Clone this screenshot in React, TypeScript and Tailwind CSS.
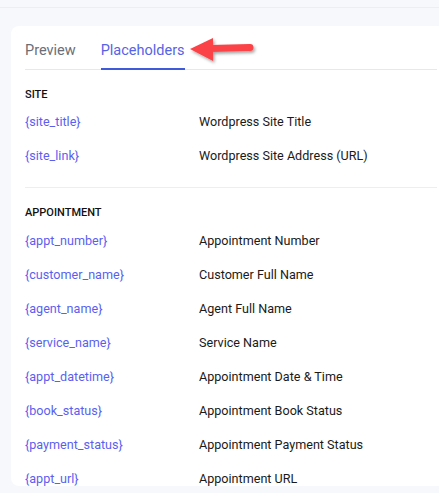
import React from 'react';

const site = [
  { key: '{site_title}', label: 'Wordpress Site Title' },
  { key: '{site_link}', label: 'Wordpress Site Address (URL)' },
];

const appointment = [
  { key: '{appt_number}', label: 'Appointment Number' },
  { key: '{customer_name}', label: 'Customer Full Name' },
  { key: '{agent_name}', label: 'Agent Full Name' },
  { key: '{service_name}', label: 'Service Name' },
  { key: '{appt_datetime}', label: 'Appointment Date & Time' },
  { key: '{book_status}', label: 'Appointment Book Status' },
  { key: '{payment_status}', label: 'Appointment Payment Status' },
  { key: '{appt_url}', label: 'Appointment URL' },
];

const Row: React.FC<{ k: string; label: string }> = ({ k, label }) => (
  <div className="flex items-center h-[34px] text-[12.6px]">
    <span className="w-[174px] text-[#5b5ff0]">{k}</span>
    <span className="text-[#1a1a1a]">{label}</span>
  </div>
);

const Arrow = () => (
  <svg className="absolute left-[186px] top-[35px]" width="76" height="34" viewBox="0 0 76 34">
    <defs>
      <filter id="sh" x="-20%" y="-30%" width="140%" height="170%">
        <feDropShadow dx="1.5" dy="2" stdDeviation="1.5" floodColor="#000" floodOpacity="0.35" />
      </filter>
    </defs>
    <g filter="url(#sh)">
      <path d="M4 14 L27 3 L27 26 Z" fill="#fb4346" />
      <line x1="24" y1="13.5" x2="64" y2="12.5" stroke="#fb4346" strokeWidth="7" strokeLinecap="round" />
    </g>
  </svg>
);

export default function App() {
  return (
    <div
      className="w-[439px] h-[493px] bg-[#f7f8fc] overflow-hidden relative"
      style={{ fontFamily: 'Roboto, "Liberation Sans", sans-serif' }}
    >
      <div className="h-[8px] border-b border-[#eceef3]" />
      <div className="ml-[11px] mt-[18px] w-[440px] h-[460px] bg-white rounded-l-lg px-[14px]">
        <div className="flex gap-[25px] h-[44px] border-b border-[#e6e8ec] text-[14.5px]">
          <div className="pt-[14px] text-[#6b6e76]">Preview</div>
          <div className="pt-[14px] text-[#5763e6] border-b-2 border-[#3f5bd9] -mb-px">Placeholders</div>
        </div>

        <div className="pt-[17px] pb-[14px] border-b border-[#eceef1]">
          <div className="h-[16px] leading-[16px] text-[11px] font-medium text-[#111]">SITE</div>
          <div className="mt-[2px]">
            {site.map((r) => (
              <Row key={r.key} k={r.key} label={r.label} />
            ))}
          </div>
        </div>

        <div className="pt-[17px]">
          <div className="h-[16px] leading-[16px] text-[11px] font-medium text-[#111]">APPOINTMENT</div>
          <div className="mt-[3px]">
            {appointment.map((r) => (
              <Row key={r.key} k={r.key} label={r.label} />
            ))}
          </div>
        </div>
      </div>
      <Arrow />
    </div>
  );
}
